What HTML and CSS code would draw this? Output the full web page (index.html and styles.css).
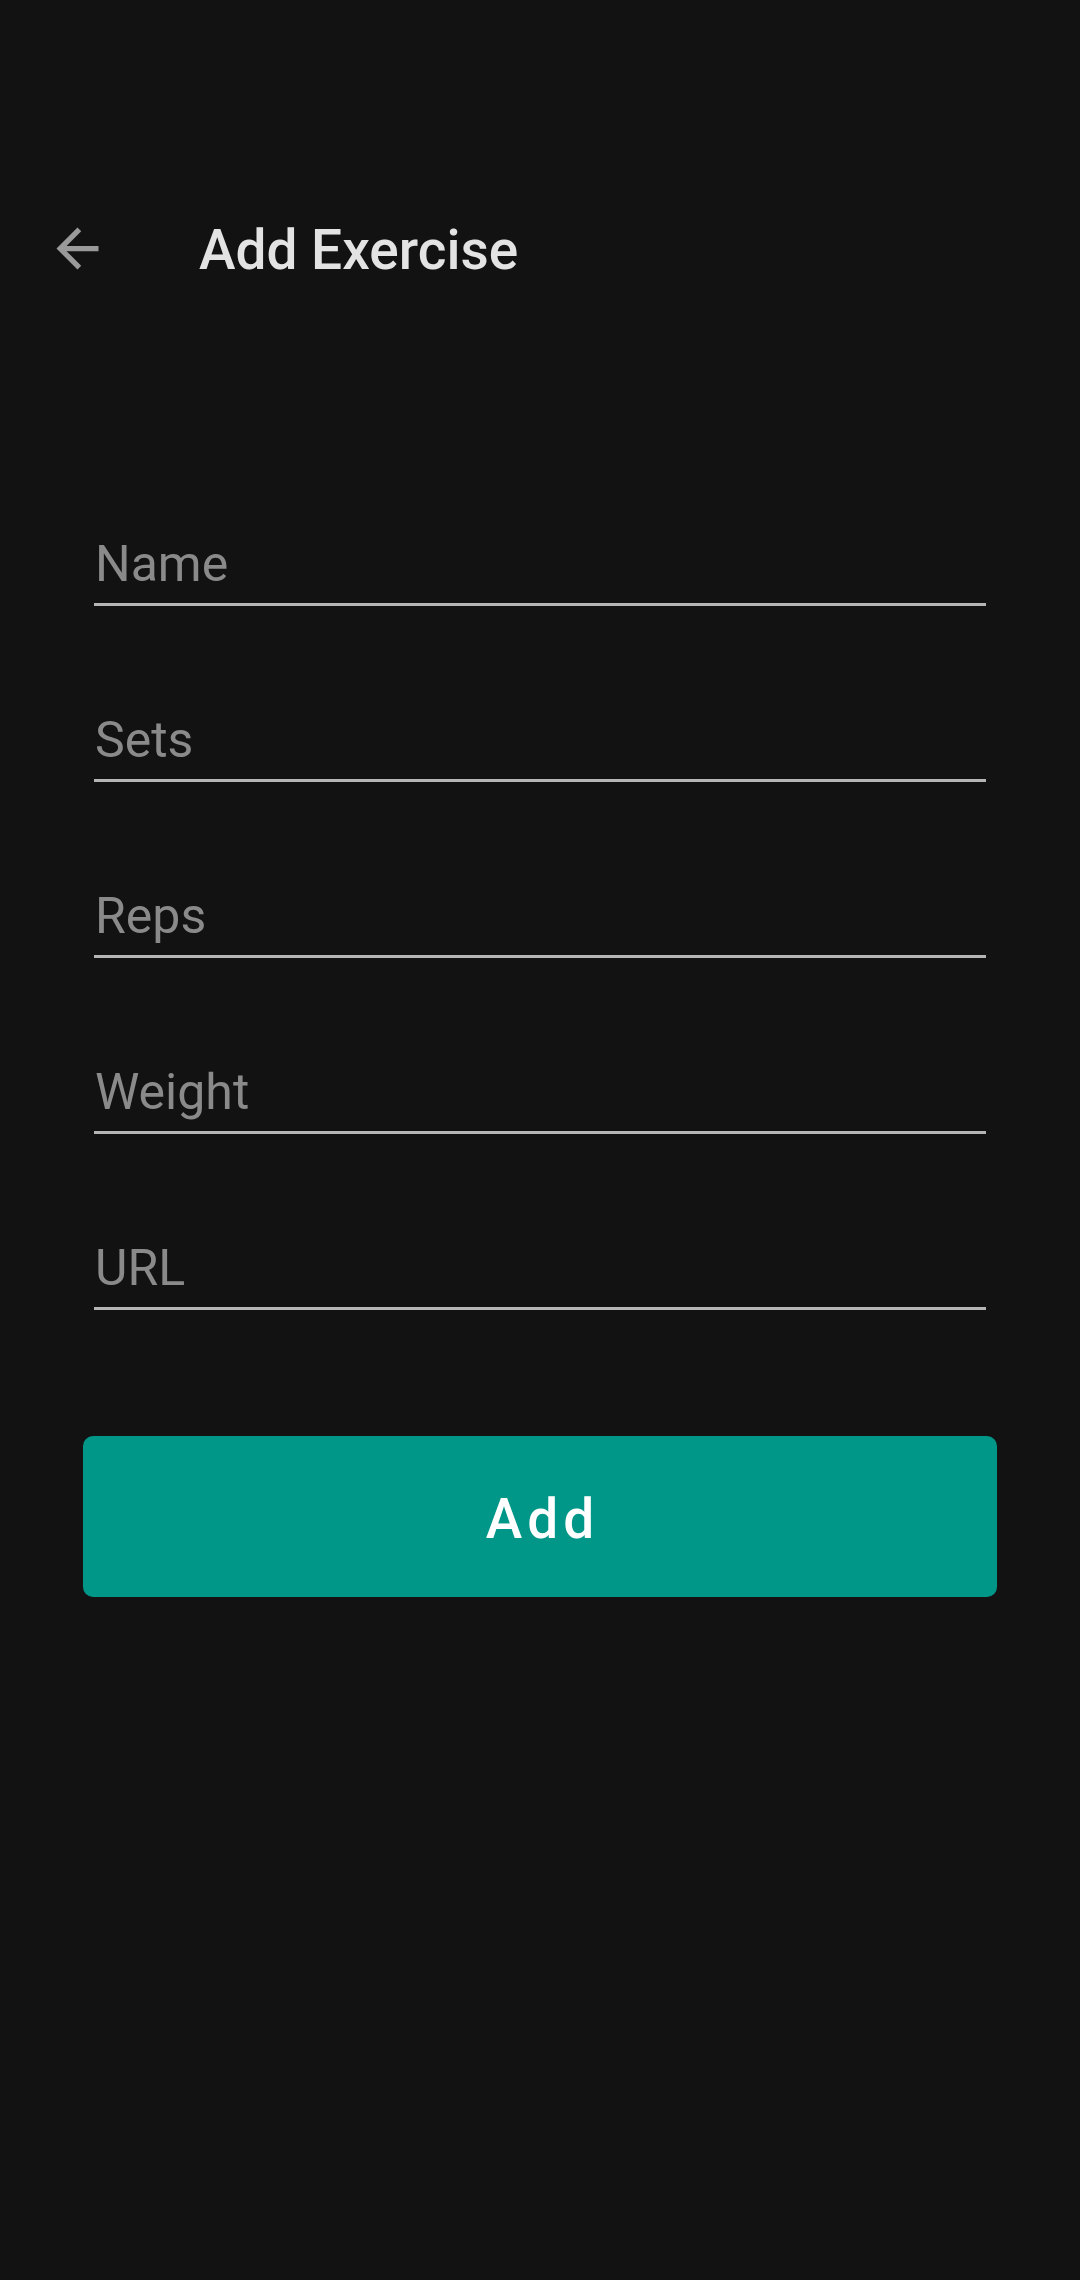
FILE: index.html
```html
<!DOCTYPE html>
<html lang="en">
<head>
<meta charset="utf-8">
<title>Add Exercise</title>
<link rel="stylesheet" href="styles.css">
</head>
<body>
<div class="screen">
  <header class="toolbar">
    <svg class="back" viewBox="0 0 24 24" aria-hidden="true"><path d="M20 11H7.83l5.59-5.59L12 4l-8 8 8 8 1.41-1.41L7.83 13H20v-2z"/></svg>
    <h1 class="title">Add Exercise</h1>
  </header>
  <form class="form">
    <div class="field">Name</div>
    <div class="field">Sets</div>
    <div class="field">Reps</div>
    <div class="field">Weight</div>
    <div class="field">URL</div>
  </form>
  <div class="actions">
    <button class="add-btn" type="button">Add</button>
  </div>
</div>
</body>
</html>
```

FILE: styles.css
```css
html, body {
  margin: 0;
  padding: 0;
  background: #121212;
}
.screen {
  width: 1080px;
  height: 2280px;
  background: #121212;
  font-family: Roboto, "Noto Sans", sans-serif;
  overflow: hidden;
}
.toolbar {
  margin-top: 192px;
  height: 112px;
  display: flex;
  align-items: center;
}
.back {
  width: 63px;
  height: 63px;
  margin-left: 46px;
  fill: #9a9a9a;
  flex: none;
}
.title {
  margin: 0 0 0 90px;
  padding-top: 4px;
  font-size: 55px;
  font-weight: 500;
  line-height: 1;
  color: #e3e3e3;
}
.form {
  margin: 228px 0 0;
  padding: 0 94px;
}
.field {
  margin-top: 102px;
  font-size: 50px;
  line-height: 64px;
  padding-bottom: 7px;
  border-bottom: 3px solid #b5b5b5;
  color: #8a8a8a;
  padding-left: 1px;
}
.field:first-child {
  margin-top: 0;
}
.actions {
  margin-top: 126px;
  padding: 0 83px;
}
.add-btn {
  display: block;
  width: 100%;
  height: 161px;
  border: none;
  border-radius: 10px;
  background: #009688;
  color: #ffffff;
  font-family: Roboto, "Noto Sans", sans-serif;
  font-size: 55px;
  font-weight: 500;
  letter-spacing: 5px;
  padding: 4px 0 0 5px;
}
```
